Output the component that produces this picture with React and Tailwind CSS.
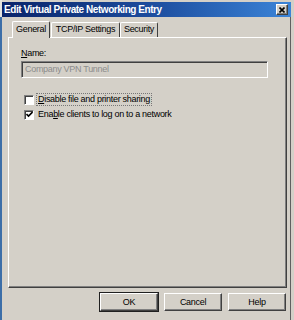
const raised =
  'border border-t-white border-l-white border-r-[#404040] border-b-[#404040] shadow-[inset_-1px_-1px_0_#808080]';

const Check = ({ checked, focused, children }) => (
  <div className="flex items-center h-[15px] pl-[16px]">
    <div className="w-[10px] h-[10px] bg-white border border-t-[#808080] border-l-[#808080] border-r-white border-b-white shadow-[inset_1px_1px_0_#404040] flex items-center justify-center">
      {checked && (
        <svg width="7" height="7" viewBox="0 0 7 7">
          <path d="M0.5 3 L2.5 5 L6.5 1" stroke="#000" strokeWidth="1.6" fill="none" />
        </svg>
      )}
    </div>
    <span
      className={`ml-[3px] px-[1px] leading-[11px] ${
        focused ? 'outline-1 outline-dotted outline-[#777]' : ''
      }`}
    >
      {children}
    </span>
  </div>
);

const Tab = ({ active, children, w }) => (
  <div
    className={`flex items-center justify-center border-t border-l border-r border-t-white border-l-white border-r-[#404040] rounded-t-[2px] ${
      active ? 'h-[17px] relative z-10 bg-[#d4d0c8] -mb-[1px]' : 'h-[15px]'
    } ${w}`}
  >
    {children}
  </div>
);

const Button = ({ children, isDefault }) => (
  <button
    className={`w-[58px] h-[18px] bg-[#d4d0c8] ${raised} flex items-center justify-center leading-none ${
      isDefault ? 'outline-1 outline-[#202020]' : ''
    }`}
  >
    {children}
  </button>
);

export default function App() {
  return (
    <div
      className="w-[294px] h-[320px] bg-[#d4d0c8] relative overflow-hidden flex text-[9px] text-black tracking-[-0.3px]"
      style={{ fontFamily: '"Liberation Sans", Arial, sans-serif' }}
    >
      {/* left edge */}
      <div className="w-[2px] flex flex-col">
        <div className="h-[17px] bg-[#e6e4de]" />
        <div className="flex-1 bg-[#3c6ea8]" />
      </div>

      <div className="flex-1 flex flex-col pt-[2px]">
        {/* Title bar */}
        <div className="h-[15px] mr-[3px] flex items-center justify-between bg-gradient-to-r from-[#0a246a] via-[#1c4b9c] to-[#3b84d8] pl-[2px] pr-[3px]">
          <span className="text-white font-bold text-[10px] tracking-[-0.45px] leading-none">
            Edit Virtual Private Networking Entry
          </span>
          <div className={`w-[12px] h-[11px] bg-[#d4d0c8] ${raised} flex items-center justify-center`}>
            <svg width="6" height="6" viewBox="0 0 6 6">
              <path d="M0.5 0.5 L5.5 5.5 M5.5 0.5 L0.5 5.5" stroke="#000" strokeWidth="1.6" />
            </svg>
          </div>
        </div>

        <div className="flex-1 flex mr-[3px] border-r border-[#606060]">
          <div className="flex-1 flex flex-col pl-[6px] pr-[3px]">
            {/* Tabs */}
            <div className="flex items-end mt-[4px] pl-[4px]">
              <Tab active w="w-[38px]">General</Tab>
              <Tab w="w-[69px] ml-[1px]">TCP/IP Settings</Tab>
              <Tab w="w-[38px]">Security</Tab>
            </div>

            {/* Panel */}
            <div className="h-[251px] border border-t-white border-l-white border-r-[#404040] border-b-[#404040] shadow-[inset_-1px_-1px_0_#808080] flex flex-col pl-[12px] pr-[18px]">
              <div className="mt-[10px] h-[11px] leading-[11px]">
                <span className="underline">N</span>ame:
              </div>
              <div className="mt-[2px] h-[17px] border border-t-[#808080] border-l-[#808080] border-r-white border-b-white shadow-[inset_1px_1px_0_#404040] flex items-center pl-[3px] text-[#8c8c8c]">
                Company VPN Tunnel
              </div>
              <div className="mt-[14px] -ml-[13px]">
                <Check focused>
                  <span className="underline">D</span>isable file and printer sharing
                </Check>
                <Check checked>
                  Ena<span className="underline">b</span>le clients to log on to a network
                </Check>
              </div>
            </div>

            {/* Buttons */}
            <div className="flex justify-end gap-[6px] mt-[5px] pr-[1px]">
              <Button isDefault>OK</Button>
              <Button>Cancel</Button>
              <Button>Help</Button>
            </div>
          </div>
        </div>
      </div>
    </div>
  );
}
